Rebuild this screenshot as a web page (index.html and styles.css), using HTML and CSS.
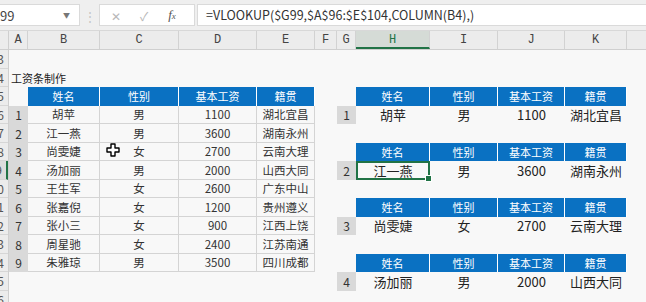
FILE: index.html
```html
<!DOCTYPE html>
<html lang="zh-CN">
<head>
  <meta charset="UTF-8" />
  <title>工资条制作</title>
  <link rel="stylesheet" href="styles.css">
</head>
<body>

  <!-- formula bar -->
  <div class="toolbar">
    <div class="namebox"><span>99</span><span class="arrow">&#9660;</span></div>
    <div class="grip">&#8942;</div>
    <div class="fxbox">
      <span class="btn">&#10005;</span>
      <span class="btn">&#10003;</span>
      <span class="btn fx"><i>f</i><small>x</small></span>
    </div>
    <div class="formula">=VLOOKUP($G99,$A$96:$E$104,COLUMN(B4),)</div>
  </div>

  <!-- column letters -->
  <div class="colheads">
    <div class="corner"></div>
    <div class="ch w-a">A</div>
    <div class="ch w-b">B</div>
    <div class="ch w-c">C</div>
    <div class="ch w-d">D</div>
    <div class="ch w-e">E</div>
    <div class="ch w-f">F</div>
    <div class="ch w-g">G</div>
    <div class="ch w-h active">H</div>
    <div class="ch w-i">I</div>
    <div class="ch w-j">J</div>
    <div class="ch w-k">K</div>
    <div class="ch w-l"></div>
  </div>

  <div class="sheet">
    <!-- row numbers (mostly scrolled off) -->
    <div class="rowheads">
      <div class="rh"><span>93</span></div>
      <div class="rh"><span>94</span></div>
      <div class="rh"><span>95</span></div>
      <div class="rh"><span>96</span></div>
      <div class="rh"><span>97</span></div>
      <div class="rh"><span>98</span></div>
      <div class="rh active"><span>99</span></div>
      <div class="rh"><span>100</span></div>
      <div class="rh"><span>101</span></div>
      <div class="rh"><span>102</span></div>
      <div class="rh"><span>103</span></div>
      <div class="rh"><span>104</span></div>
      <div class="rh"><span>105</span></div>
      <div class="rh"><span>106</span></div>
    </div>

    <!-- source table -->
    <div class="left">
      <div class="row"></div>
      <div class="row title">工资条制作</div>
      <div class="grid src">
        <div></div>
        <div class="hd">姓名</div><div class="hd">性别</div><div class="hd">基本工资</div><div class="hd">籍贯</div>

        <div class="num">1</div><div class="cell">胡苹</div><div class="cell">男</div><div class="cell">1100</div><div class="cell">湖北宜昌</div>
        <div class="num">2</div><div class="cell">江一燕</div><div class="cell">男</div><div class="cell">3600</div><div class="cell">湖南永州</div>
        <div class="num">3</div><div class="cell">尚雯婕</div><div class="cell">女</div><div class="cell">2700</div><div class="cell">云南大理</div>
        <div class="num">4</div><div class="cell">汤加丽</div><div class="cell">男</div><div class="cell">2000</div><div class="cell">山西大同</div>
        <div class="num">5</div><div class="cell">王生军</div><div class="cell">女</div><div class="cell">2600</div><div class="cell">广东中山</div>
        <div class="num">6</div><div class="cell">张嘉倪</div><div class="cell">女</div><div class="cell">1200</div><div class="cell">贵州遵义</div>
        <div class="num">7</div><div class="cell">张小三</div><div class="cell">女</div><div class="cell">900</div><div class="cell">江西上饶</div>
        <div class="num">8</div><div class="cell">周星驰</div><div class="cell">女</div><div class="cell">2400</div><div class="cell">江苏南通</div>
        <div class="num">9</div><div class="cell">朱雅琼</div><div class="cell">男</div><div class="cell">3500</div><div class="cell">四川成都</div>
      </div>
    </div>

    <div class="w-f"></div>

    <!-- generated pay slips -->
    <div class="right">
      <div class="row"></div>
      <div class="row"></div>

      <div class="grid slip">
        <div></div>
        <div class="hd">姓名</div><div class="hd">性别</div><div class="hd">基本工资</div><div class="hd">籍贯</div>
        <div class="num">1</div><div class="rd">胡苹</div><div class="rd">男</div><div class="rd">1100</div><div class="rd">湖北宜昌</div>
      </div>
      <div class="row"></div>

      <div class="grid slip">
        <div></div>
        <div class="hd">姓名</div><div class="hd">性别</div><div class="hd">基本工资</div><div class="hd">籍贯</div>
        <div class="num">2</div><div class="rd sel">江一燕</div><div class="rd">男</div><div class="rd">3600</div><div class="rd">湖南永州</div>
      </div>
      <div class="row"></div>

      <div class="grid slip">
        <div></div>
        <div class="hd">姓名</div><div class="hd">性别</div><div class="hd">基本工资</div><div class="hd">籍贯</div>
        <div class="num">3</div><div class="rd">尚雯婕</div><div class="rd">女</div><div class="rd">2700</div><div class="rd">云南大理</div>
      </div>
      <div class="row"></div>

      <div class="grid slip">
        <div></div>
        <div class="hd">姓名</div><div class="hd">性别</div><div class="hd">基本工资</div><div class="hd">籍贯</div>
        <div class="num">4</div><div class="rd">汤加丽</div><div class="rd">男</div><div class="rd">2000</div><div class="rd">山西大同</div>
      </div>
    </div>
  </div>

  <!-- mouse pointer (white cross) -->
  <svg class="pointer" width="14" height="14" viewBox="0 0 14 14">
    <path d="M5 1h4v4h4v4h-4v4h-4v-4h-4v-4h4z" fill="#fff" stroke="#000" stroke-width="1.4" stroke-linejoin="round"/>
  </svg>

</body>
</html>
```

FILE: styles.css
```css
body {
  margin: 0;
  width: 646px;
  height: 302px;
  overflow: hidden;
  position: relative;
  font-family: "Noto Sans CJK SC", "Noto Sans", sans-serif;
  background: #f8f8f8;
  color: #333;
}

/* formula bar */
.toolbar {
  display: flex;
  align-items: center;
  height: 30px;
  background: #efefef;
}

.namebox {
  display: flex;
  align-items: center;
  justify-content: space-between;
  width: 80px;
  height: 22px;
  padding-right: 9px;
  box-sizing: border-box;
  background: #fff;
  border: 1px solid #dadada;
  border-left: none;
  font-size: 13px;
  color: #444;
}

.namebox .arrow {
  font-size: 7px;
  color: #777;
}

.grip {
  width: 19px;
  text-align: center;
  color: #c4c4c4;
  font-size: 12px;
}

.fxbox {
  display: flex;
  align-items: center;
  width: 96px;
  height: 22px;
  padding-left: 2px;
  box-sizing: border-box;
  background: #fff;
  border: 1px solid #dadada;
}

.fxbox .btn {
  width: 28px;
  text-align: center;
  color: #b8b8b8;
  font-size: 12px;
}

.fxbox .fx {
  color: #555;
  font-family: "Liberation Serif", serif;
  font-size: 13px;
}

.fxbox .fx small {
  font-size: 9px;
  font-style: italic;
}

.formula {
  flex: 1;
  height: 22px;
  margin-left: 2px;
  padding-left: 8px;
  box-sizing: border-box;
  background: #fff;
  border: 1px solid #dadada;
  border-right: none;
  font-size: 12.5px;
  line-height: 20px;
  color: #333;
}

/* column letters */
.colheads {
  display: flex;
  height: 20px;
  background: #ececec;
  border-top: 1px solid #d8d8d8;
  border-bottom: 1px solid #cfcfcf;
  box-sizing: border-box;
}

.corner {
  width: 9px;
  border-right: 1px solid #cfcfcf;
  box-sizing: border-box;
}

.ch {
  border-right: 1px solid #d2d2d2;
  box-sizing: border-box;
  text-align: center;
  font-family: "Liberation Mono", monospace;
  font-size: 12px;
  line-height: 19px;
  color: #444;
}

.ch.active {
  background: #d5dbd6;
  border-bottom: 2px solid #217346;
  color: #217346;
}

.w-a { width: 19px; }
.w-b { width: 72px; }
.w-c { width: 79px; }
.w-d { width: 78px; }
.w-e { width: 58px; }
.w-f { width: 22px; flex-shrink: 0; }
.w-g { width: 19px; }
.w-h { width: 74px; }
.w-i { width: 68px; }
.w-j { width: 67px; }
.w-k { width: 62px; }
.w-l { flex: 1; border-right: none; }

/* sheet body */
.sheet {
  display: flex;
  align-items: flex-start;
}

.rowheads {
  width: 9px;
  flex-shrink: 0;
  background: #ececec;
  border-right: 1px solid #cfcfcf;
  box-sizing: border-box;
}

.rh {
  display: flex;
  justify-content: flex-end;
  align-items: center;
  height: 18.5px;
  overflow: hidden;
  border-bottom: 1px solid #d6d6d6;
  box-sizing: border-box;
  font-size: 12px;
  color: #555;
}

.rh span {
  margin-right: 4px;
}

.rh.active {
  border-right: 2px solid #217346;
  background: #dcdcdc;
}

.row {
  height: 18.5px;
}

.left {
  width: 306px;
  flex-shrink: 0;
}

.title {
  padding-left: 2px;
  font-size: 11px;
  line-height: 19px;
  color: #222;
}

.grid {
  display: grid;
  grid-auto-rows: 18.5px;
}

.src {
  grid-template-columns: 19px 72px 79px 78px 58px;
}

.slip {
  grid-template-columns: 19px 74px 68px 67px 62px;
}

.grid > div {
  display: flex;
  align-items: center;
  justify-content: center;
  box-sizing: border-box;
}

.hd {
  background: #0a71c2;
  border-right: 1px solid #fff;
  color: #fff;
  font-size: 11px;
}

.num {
  background: #d9d9d9;
  font-size: 12px;
  color: #333;
}

.cell {
  border-right: 1px solid #d4d4d4;
  border-bottom: 1px solid #d4d4d4;
  font-size: 11.5px;
  color: #333;
}

.rd {
  font-size: 13px;
  color: #222;
}

.rd.sel {
  position: relative;
  border: 2px solid #217346;
}

.rd.sel::after {
  content: "";
  position: absolute;
  right: -4px;
  bottom: -4px;
  width: 5px;
  height: 5px;
  background: #217346;
  border: 1px solid #fff;
}

.pointer {
  position: absolute;
  left: 106px;
  top: 143px;
}
```
